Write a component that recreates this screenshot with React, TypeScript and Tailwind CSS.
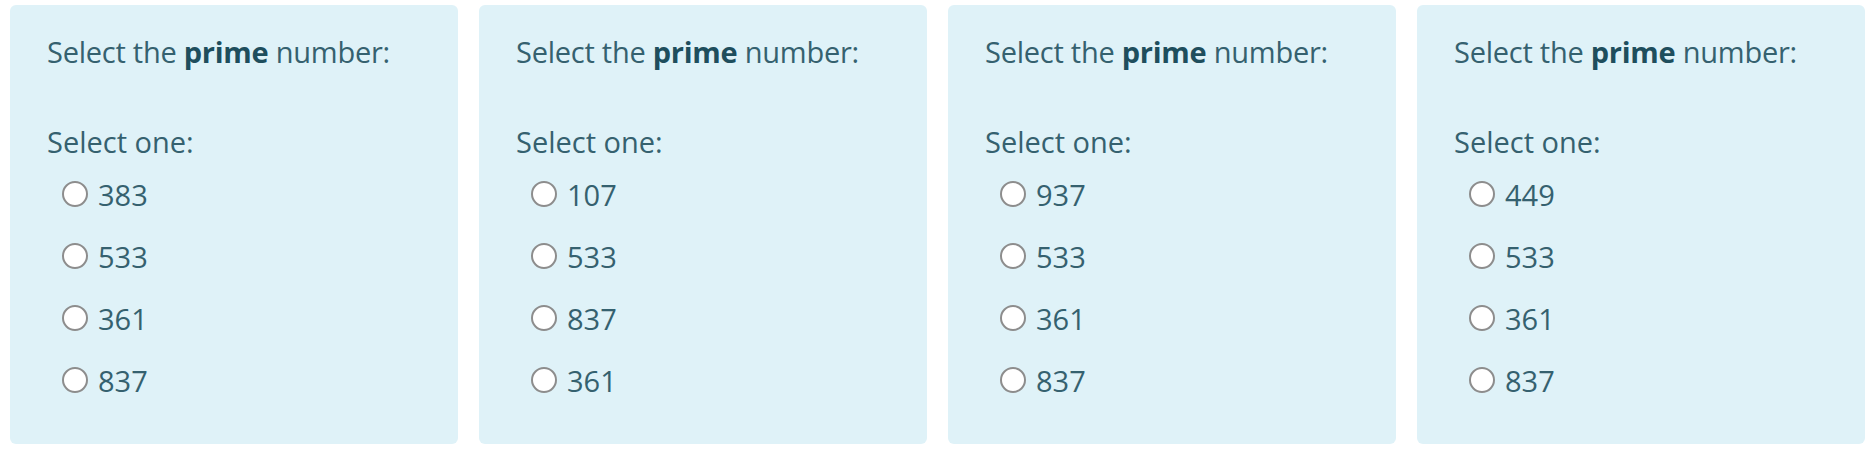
const questions = [
  ['383', '533', '361', '837'],
  ['107', '533', '837', '361'],
  ['937', '533', '361', '837'],
  ['449', '533', '361', '837'],
]

function Radio() {
  return (
    <span className="ml-[15px] mr-[10px] inline-block h-[26px] w-[26px] shrink-0 rounded-full border-2 border-[#8d8d8d] bg-white" />
  )
}

function QuestionCard({ options }: { options: string[] }) {
  return (
    <div className="flex-1 h-[439px] rounded-[6px] bg-[#dff2f8] pl-[37px] pt-[25px] text-[29px] text-[#35616f]">
      <p className="leading-[43px] tracking-[-0.25px]">
        Select the <strong className="font-bold text-[#1e4e5d]">prime</strong> number:
      </p>
      <p className="mt-[47px] leading-[43px]">Select one:</p>
      <div>
        {options.map((opt, i) => (
          <label key={i} className="flex h-[62px] items-center">
            <Radio />
            <span className="leading-none">{opt}</span>
          </label>
        ))}
      </div>
    </div>
  )
}

export default function App() {
  return (
    <div className="flex h-[449px] w-[1875px] gap-[21px] bg-white px-[10px] pt-[5px] font-['Open_Sans',sans-serif]">
      {questions.map((opts, i) => (
        <QuestionCard key={i} options={opts} />
      ))}
    </div>
  )
}
